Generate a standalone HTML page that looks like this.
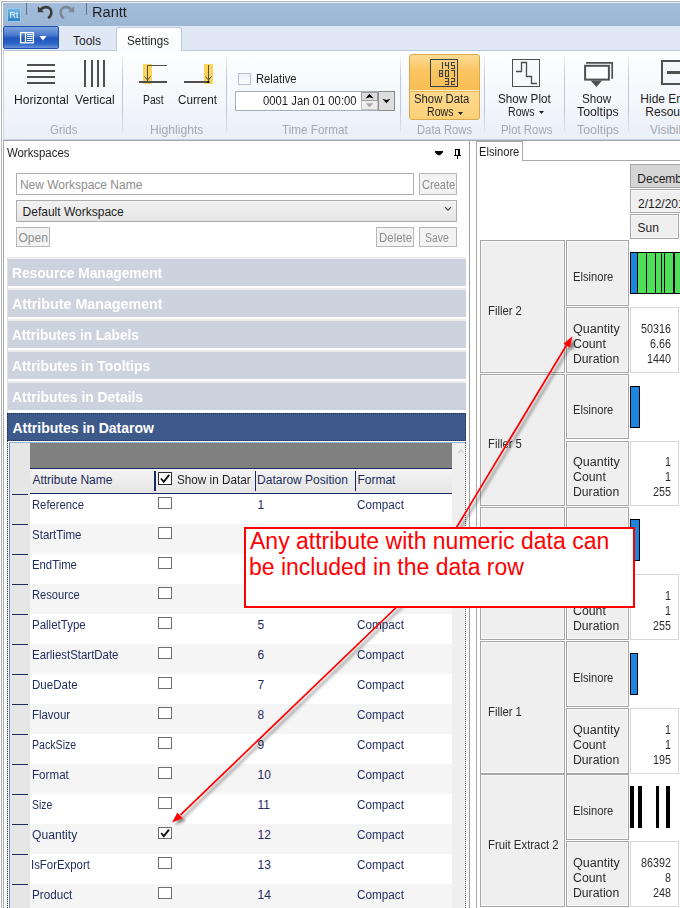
<!DOCTYPE html>
<html><head><meta charset="utf-8"><style>
html,body{margin:0;padding:0;}
body{width:680px;height:908px;overflow:hidden;position:relative;background:#fff;font-family:"Liberation Sans",sans-serif;}
div{position:absolute;box-sizing:border-box;}
.t{white-space:pre;}
svg{position:absolute;}
</style></head><body>
<div style="left:0px;top:0px;width:680px;height:908px;background:#fff;"></div>
<div style="left:1px;top:1px;width:679px;height:907px;background:#b4b4b4;"></div>
<div style="left:2px;top:2px;width:678px;height:906px;background:#fff;"></div>
<div style="left:3px;top:3px;width:677px;height:23px;background:linear-gradient(#a3bcd9,#9db6d5);"></div>
<div style="left:2px;top:2px;width:678px;height:1px;background:#e9eef5;"></div>
<div style="left:7px;top:8px;width:14px;height:14px;background:linear-gradient(#6fb4e6,#2b7fc4);border:1px solid #9cc8ea;"></div>
<div class="t" style="left:9.30px;top:11.38px;font-size:9px;line-height:9px;color:#ffffff;font-weight:normal;">Rt</div>
<div style="left:26px;top:3px;width:1px;height:12px;background:#5f7089;"></div>
<div style="left:86px;top:3px;width:1px;height:12px;background:#5f7089;"></div>
<svg style="left:34px;top:2px" width="44" height="20" viewBox="0 0 44 20"><path d="M6.5 7.6 C9 4.6 13.5 4.2 16 6.6 C18.6 9.2 17.6 13.6 14.2 16.2" fill="none" stroke="#3c3c3c" stroke-width="2.7"/><path d="M3.8 4.2 L3.8 10.2 L10 10.2 Z" fill="#3c3c3c"/><g transform="translate(44,0) scale(-1,1)"><path d="M6.5 7.6 C9 4.6 13.5 4.2 16 6.6 C18.6 9.2 17.6 13.6 14.2 16.2" fill="none" stroke="#7d8896" stroke-width="2.7"/><path d="M3.8 4.2 L3.8 10.2 L10 10.2 Z" fill="#7d8896"/></g></svg>
<div class="t" style="left:91.96px;top:5.15px;font-size:14px;line-height:14px;color:#1e1e1e;font-weight:normal;transform:scaleX(1.0438);transform-origin:0 0;">Rantt</div>
<div style="left:3px;top:26px;width:677px;height:25px;background:#dfe8f4;"></div>
<div style="left:3px;top:50px;width:677px;height:1px;background:#b9c9dd;"></div>
<div style="left:3px;top:26px;width:56px;height:23px;border:1px solid #1c4fb0;border-radius:2px;background:linear-gradient(#7fa3de 0%,#4f7fcf 35%,#1f56bd 55%,#2f66c8 80%,#6c93d8 100%);"></div>
<svg style="left:19px;top:31px" width="30" height="14" viewBox="0 0 30 14"><rect x="1.6" y="1.6" width="12.8" height="10.2" fill="none" stroke="#fff" stroke-width="1.3"/><path d="M6.5 2 V11.5" stroke="#fff" stroke-width="1.2"/><path d="M8 3.5 H13.5 M8 5.5 H13.5 M8 7.5 H13.5 M8 9.5 H13.5" stroke="#fff" stroke-width="1"/><path d="M20.5 5 L27.5 5 L24 9.5 Z" fill="#fff"/></svg>
<div class="t" style="left:73.00px;top:34.54px;font-size:12px;line-height:12px;color:#1e1e1e;font-weight:normal;">Tools</div>
<div style="left:116px;top:27px;width:66px;height:25px;border:1px solid #b9c9dd;border-bottom:none;border-radius:3px 3px 0 0;background:linear-gradient(#ffffff,#fafcfe);"></div>
<div class="t" style="left:127.00px;top:34.54px;font-size:12px;line-height:12px;color:#1e1e1e;font-weight:normal;transform:scaleX(0.9686);transform-origin:0 0;">Settings</div>
<div style="left:3px;top:51px;width:677px;height:90px;background:linear-gradient(#fdfeff 0%,#f3f6fb 60%,#e9eff8 100%);"></div>
<div style="left:3px;top:139px;width:677px;height:1.1999999999999886px;background:#c5d2e3;"></div>
<div style="left:3px;top:51px;width:1px;height:89px;background:#c9d7e8;"></div>
<div style="left:3px;top:140.2px;width:677px;height:1.200000000000017px;background:#a6a6a6;"></div>
<div style="left:122px;top:57px;width:1px;height:74px;background:linear-gradient(rgba(180,196,218,0.2),#b9c8dc 30%,#b9c8dc 70%,rgba(180,196,218,0.3));"></div>
<div style="left:226px;top:57px;width:1px;height:74px;background:linear-gradient(rgba(180,196,218,0.2),#b9c8dc 30%,#b9c8dc 70%,rgba(180,196,218,0.3));"></div>
<div style="left:400px;top:57px;width:1px;height:74px;background:linear-gradient(rgba(180,196,218,0.2),#b9c8dc 30%,#b9c8dc 70%,rgba(180,196,218,0.3));"></div>
<div style="left:484px;top:57px;width:1px;height:74px;background:linear-gradient(rgba(180,196,218,0.2),#b9c8dc 30%,#b9c8dc 70%,rgba(180,196,218,0.3));"></div>
<div style="left:564px;top:57px;width:1px;height:74px;background:linear-gradient(rgba(180,196,218,0.2),#b9c8dc 30%,#b9c8dc 70%,rgba(180,196,218,0.3));"></div>
<div style="left:628px;top:57px;width:1px;height:74px;background:linear-gradient(rgba(180,196,218,0.2),#b9c8dc 30%,#b9c8dc 70%,rgba(180,196,218,0.3));"></div>
<div class="t" style="left:50.00px;top:124.24px;font-size:12px;line-height:12px;color:#a4a9b0;font-weight:normal;transform:scaleX(0.9557);transform-origin:0 0;">Grids</div>
<div class="t" style="left:149.60px;top:124.24px;font-size:12px;line-height:12px;color:#a4a9b0;font-weight:normal;transform:scaleX(1.0134);transform-origin:0 0;">Highlights</div>
<div class="t" style="left:282.40px;top:124.24px;font-size:12px;line-height:12px;color:#a4a9b0;font-weight:normal;transform:scaleX(0.9733);transform-origin:0 0;">Time Format</div>
<div class="t" style="left:416.50px;top:124.24px;font-size:12px;line-height:12px;color:#a4a9b0;font-weight:normal;transform:scaleX(0.9372);transform-origin:0 0;">Data Rows</div>
<div class="t" style="left:500.60px;top:124.24px;font-size:12px;line-height:12px;color:#a4a9b0;font-weight:normal;transform:scaleX(0.9515);transform-origin:0 0;">Plot Rows</div>
<div class="t" style="left:577.00px;top:124.24px;font-size:12px;line-height:12px;color:#a4a9b0;font-weight:normal;transform:scaleX(1.0323);transform-origin:0 0;">Tooltips</div>
<div class="t" style="left:650.00px;top:124.24px;font-size:12px;line-height:12px;color:#a4a9b0;font-weight:normal;">Visibility</div>
<div style="left:27px;top:64px;width:28px;height:2px;background:#4f4f4f;"></div>
<div style="left:27px;top:70px;width:28px;height:2px;background:#4f4f4f;"></div>
<div style="left:27px;top:76px;width:28px;height:2px;background:#4f4f4f;"></div>
<div style="left:27px;top:82px;width:28px;height:2px;background:#4f4f4f;"></div>
<div style="left:84px;top:60px;width:2px;height:27px;background:#4f4f4f;"></div>
<div style="left:90.5px;top:60px;width:2.0px;height:27px;background:#4f4f4f;"></div>
<div style="left:96.5px;top:60px;width:2.0px;height:27px;background:#4f4f4f;"></div>
<div style="left:102.5px;top:60px;width:2.0px;height:27px;background:#4f4f4f;"></div>
<div class="t" style="left:14.00px;top:94.04px;font-size:12px;line-height:12px;color:#1e1e1e;font-weight:normal;transform:scaleX(1.0102);transform-origin:0 0;">Horizontal</div>
<div class="t" style="left:75.00px;top:94.04px;font-size:12px;line-height:12px;color:#1e1e1e;font-weight:normal;transform:scaleX(1.0081);transform-origin:0 0;">Vertical</div>
<div style="left:143px;top:64px;width:9px;height:20px;background:#fcd45c;"></div>
<div style="left:204px;top:64px;width:9px;height:20px;background:#fcd45c;"></div>
<svg style="left:135px;top:60px" width="90" height="28" viewBox="0 0 90 28"><path d="M4 22 H32" stroke="#4f4f4f" stroke-width="2"/><path d="M12.5 21 V5.5 H32" fill="none" stroke="#4f4f4f" stroke-width="1"/><path d="M9.5 16.5 L12.5 20 L15.5 16.5" fill="none" stroke="#4f4f4f" stroke-width="1"/><path d="M49 22 H73.5" stroke="#4f4f4f" stroke-width="2"/><rect x="72.5" y="21" width="2" height="2" fill="#000"/><path d="M73.5 5 V21" stroke="#4f4f4f" stroke-width="1"/><path d="M70.5 16.5 L73.5 20 L76.5 16.5" fill="none" stroke="#4f4f4f" stroke-width="1"/></svg>
<div class="t" style="left:142.60px;top:94.04px;font-size:12px;line-height:12px;color:#1e1e1e;font-weight:normal;transform:scaleX(0.8591);transform-origin:0 0;">Past</div>
<div class="t" style="left:178.00px;top:94.04px;font-size:12px;line-height:12px;color:#1e1e1e;font-weight:normal;transform:scaleX(0.9735);transform-origin:0 0;">Current</div>
<div style="left:238px;top:73px;width:13px;height:12px;border:1px solid #b8c1cf;background:linear-gradient(#eef1f5,#fbfcfd);"></div>
<div class="t" style="left:256.20px;top:73.14px;font-size:12px;line-height:12px;color:#1e1e1e;font-weight:normal;transform:scaleX(0.9341);transform-origin:0 0;">Relative</div>
<div style="left:235px;top:91px;width:160px;height:20px;border:1px solid #a9aeb6;background:#fff;"></div>
<div class="t" style="left:263.40px;top:95.34px;font-size:12px;line-height:12px;color:#1e1e1e;font-weight:normal;transform:scaleX(0.9414);transform-origin:0 0;">0001 Jan 01 00:00</div>
<div style="left:361px;top:92px;width:17px;height:9px;border:1.5px solid #9c9c9c;background:#dcdcdc;"></div>
<div style="left:361px;top:100.5px;width:17px;height:9.5px;border:1px solid #c4c4c4;border-top:none;background:#ededed;"></div>
<div style="left:378px;top:91px;width:17px;height:20px;border:1.5px solid #8b8b8b;background:#dedede;"></div>
<svg style="left:350px;top:85px" width="50" height="30" viewBox="0 0 50 30"><path d="M15.4 13.4 L19.5 8.8 L23.6 13.4 L19.5 12.2 Z" fill="#000"/><path d="M15.8 18.2 L23.2 18.2 L19.5 22.2 Z" fill="#a4a4a4"/><path d="M32.4 13.8 L36.4 15 L40.4 13.8 L36.4 18.3 Z" fill="#000"/></svg>
<div style="left:409px;top:54px;width:71px;height:66px;border:1px solid #d9aa48;border-radius:3px;background:linear-gradient(#fcdb94 0%,#fac561 25%,#f9bd52 60%,#fbc867 100%);"></div>
<div style="left:410px;top:89.5px;width:69px;height:1.0px;background:#fff0c8;"></div>
<div style="left:410px;top:90.5px;width:69px;height:28.5px;background:linear-gradient(#fcd98e,#fbd07a);border-radius:0 0 2px 2px;border-top:1px solid #e6b65a;"></div>
<div style="left:430px;top:59px;width:28px;height:28px;border:1.3px solid #3b4048;"></div>
<svg style="left:428px;top:57px" width="32" height="32" viewBox="0 0 32 32"><path d="M14.5 5.5 L14.5 8.5 M14.5 8.5 L14.5 11.5 M17.5 5.5 L17.5 8.5 M17.5 8.5 L20.5 8.5 M20.5 5.5 L20.5 8.5 M20.5 8.5 L20.5 11.5 M23.5 5.5 L26.5 5.5 M23.5 5.5 L23.5 8.5 M23.5 8.5 L26.5 8.5 M26.5 8.5 L26.5 11.5 M23.5 11.5 L26.5 11.5 M11.5 13.5 L14.5 13.5 M14.5 13.5 L14.5 16.5 M14.5 16.5 L14.5 19.5 M11.5 19.5 L14.5 19.5 M11.5 16.5 L11.5 19.5 M11.5 13.5 L11.5 16.5 M11.5 16.5 L14.5 16.5 M17.5 13.5 L20.5 13.5 M20.5 13.5 L20.5 16.5 M20.5 16.5 L20.5 19.5 M17.5 19.5 L20.5 19.5 M17.5 16.5 L17.5 19.5 M17.5 13.5 L17.5 16.5 M23.5 13.5 L26.5 13.5 M26.5 13.5 L26.5 16.5 M26.5 16.5 L26.5 19.5 M17.5 21.5 L20.5 21.5 M20.5 21.5 L20.5 24.5 M17.5 24.5 L20.5 24.5 M20.5 24.5 L20.5 27.5 M17.5 27.5 L20.5 27.5 M23.5 21.5 L26.5 21.5 M26.5 21.5 L26.5 24.5 M23.5 24.5 L26.5 24.5 M23.5 24.5 L23.5 27.5 M23.5 27.5 L26.5 27.5 " fill="none" stroke="#3b4048" stroke-width="1.1" stroke-linecap="square"/></svg>
<div class="t" style="left:414.30px;top:93.04px;font-size:12px;line-height:12px;color:#1e1e1e;font-weight:normal;transform:scaleX(0.9437);transform-origin:0 0;">Show Data</div>
<div class="t" style="left:427.00px;top:106.14px;font-size:12px;line-height:12px;color:#1e1e1e;font-weight:normal;transform:scaleX(0.8832);transform-origin:0 0;">Rows</div>
<svg style="left:457px;top:111px" width="8" height="5" viewBox="0 0 8 5"><path d="M1 1 H6 L3.5 4 Z" fill="#1e1e1e"/></svg>
<div style="left:512px;top:59px;width:28px;height:28px;border:1.5px solid #4d4d4d;background:#f7f9fc;"></div>
<svg style="left:512px;top:59px" width="28" height="28" viewBox="0 0 28 28"><path d="M4 12.5 H9.5 V3.5 H14.5 V17.5 H19.5 V24.5 H25" fill="none" stroke="#4d4d4d" stroke-width="1.3"/></svg>
<div class="t" style="left:497.60px;top:92.84px;font-size:12px;line-height:12px;color:#1e1e1e;font-weight:normal;transform:scaleX(0.9763);transform-origin:0 0;">Show Plot</div>
<div class="t" style="left:508.00px;top:105.84px;font-size:12px;line-height:12px;color:#1e1e1e;font-weight:normal;transform:scaleX(0.8832);transform-origin:0 0;">Rows</div>
<svg style="left:538px;top:110px" width="8" height="5" viewBox="0 0 8 5"><path d="M1 1 H6 L3.5 4 Z" fill="#1e1e1e"/></svg>
<svg style="left:582px;top:60px" width="33" height="28" viewBox="0 0 33 28"><path d="M4.1 2.8 H30.2 V18.7" fill="none" stroke="#505050" stroke-width="1.7"/><rect x="3.1" y="5.8" width="23.8" height="13.8" fill="#fbfcfe" stroke="#505050" stroke-width="2"/><path d="M8.6 20.4 L20.2 20.4 L14.4 26.9 Z" fill="#505050"/></svg>
<div class="t" style="left:581.50px;top:92.84px;font-size:12px;line-height:12px;color:#1e1e1e;font-weight:normal;transform:scaleX(0.9719);transform-origin:0 0;">Show</div>
<div class="t" style="left:576.50px;top:105.84px;font-size:12px;line-height:12px;color:#1e1e1e;font-weight:normal;transform:scaleX(1.0249);transform-origin:0 0;">Tooltips</div>
<div style="left:661px;top:60px;width:29px;height:25px;border:2.5px solid #505050;background:#f4f6fa;"></div>
<div style="left:667px;top:71px;width:23px;height:3px;background:#505050;"></div>
<div class="t" style="left:640.30px;top:92.84px;font-size:12px;line-height:12px;color:#1e1e1e;font-weight:normal;">Hide Empty</div>
<div class="t" style="left:645.30px;top:105.84px;font-size:12px;line-height:12px;color:#1e1e1e;font-weight:normal;">Resources</div>
<div style="left:3px;top:141px;width:467px;height:767px;background:#fff;"></div>
<div style="left:3px;top:141px;width:1px;height:767px;background:#a9a9a9;"></div>
<div style="left:469px;top:141px;width:1px;height:767px;background:#a0a0a0;"></div>
<div class="t" style="left:6.60px;top:146.64px;font-size:12px;line-height:12px;color:#1e1e1e;font-weight:normal;transform:scaleX(0.9483);transform-origin:0 0;">Workspaces</div>
<svg style="left:434px;top:150px" width="10" height="6" viewBox="0 0 10 6"><path d="M1 1 H9 V2.5 L6 5.3 H4 L1 2.5 Z" fill="#000"/></svg>
<div style="left:455px;top:149px;width:5px;height:1px;background:#000;"></div>
<div style="left:455px;top:149px;width:1px;height:6px;background:#000;"></div>
<div style="left:458px;top:149px;width:2px;height:6px;background:#000;"></div>
<div style="left:454px;top:154.5px;width:7px;height:1.5px;background:#000;"></div>
<div style="left:457px;top:156px;width:1px;height:3px;background:#000;"></div>
<div style="left:16px;top:173px;width:398px;height:22px;border:1px solid #abadb3;background:#fff;"></div>
<div class="t" style="left:19.90px;top:178.84px;font-size:12px;line-height:12px;color:#8d8d8d;font-weight:normal;">New Workspace Name</div>
<div style="left:419px;top:173px;width:38px;height:22px;border:1px solid #b7b7b7;background:#f3f3f3;"></div>
<div class="t" style="left:421.50px;top:178.84px;font-size:12px;line-height:12px;color:#8d8d8d;font-weight:normal;transform:scaleX(0.9218);transform-origin:0 0;">Create</div>
<div style="left:16px;top:200px;width:441px;height:22px;border:1px solid #acacac;background:linear-gradient(#f2f2f2,#e5e5e5);"></div>
<div class="t" style="left:22.60px;top:205.74px;font-size:12px;line-height:12px;color:#1e1e1e;font-weight:normal;">Default Workspace</div>
<svg style="left:444px;top:206px" width="8" height="6" viewBox="0 0 8 6"><path d="M1 1.2 L4 4.2 L7 1.2" fill="none" stroke="#444" stroke-width="1.2"/></svg>
<div style="left:16px;top:227px;width:34px;height:20px;border:1px solid #b7b7b7;background:#f3f3f3;"></div>
<div class="t" style="left:18.50px;top:231.84px;font-size:12px;line-height:12px;color:#8d8d8d;font-weight:normal;">Open</div>
<div style="left:376px;top:227px;width:38px;height:20px;border:1px solid #b7b7b7;background:#f3f3f3;"></div>
<div class="t" style="left:378.90px;top:231.84px;font-size:12px;line-height:12px;color:#8d8d8d;font-weight:normal;transform:scaleX(0.9568);transform-origin:0 0;">Delete</div>
<div style="left:419px;top:227px;width:38px;height:20px;border:1px solid #b7b7b7;background:#f3f3f3;"></div>
<div class="t" style="left:425.30px;top:231.84px;font-size:12px;line-height:12px;color:#8d8d8d;font-weight:normal;transform:scaleX(0.8671);transform-origin:0 0;">Save</div>
<div style="left:6.5px;top:257px;width:459.5px;height:651px;border-left:1px solid #e0e0e0;border-top:1px solid #e0e0e0;"></div>
<div style="left:7.5px;top:257.3px;width:458.0px;height:1.5px;background:#ececec;"></div>
<div style="left:7.5px;top:258.8px;width:458.0px;height:27.5px;background:#cdd3de;"></div>
<div class="t" style="left:12.40px;top:266.45px;font-size:14px;line-height:14px;color:#ffffff;font-weight:bold;transform:scaleX(0.9791);transform-origin:0 0;">Resource Management</div>
<div style="left:7.5px;top:288.3px;width:458.0px;height:1.5px;background:#ececec;"></div>
<div style="left:7.5px;top:289.8px;width:458.0px;height:27.5px;background:#cdd3de;"></div>
<div class="t" style="left:12.40px;top:297.45px;font-size:14px;line-height:14px;color:#ffffff;font-weight:bold;transform:scaleX(1.0187);transform-origin:0 0;">Attribute Management</div>
<div style="left:7.5px;top:319.3px;width:458.0px;height:1.5px;background:#ececec;"></div>
<div style="left:7.5px;top:320.8px;width:458.0px;height:27.5px;background:#cdd3de;"></div>
<div class="t" style="left:12.40px;top:328.45px;font-size:14px;line-height:14px;color:#ffffff;font-weight:bold;transform:scaleX(0.9702);transform-origin:0 0;">Attributes in Labels</div>
<div style="left:7.5px;top:350.3px;width:458.0px;height:1.5px;background:#ececec;"></div>
<div style="left:7.5px;top:351.8px;width:458.0px;height:27.5px;background:#cdd3de;"></div>
<div class="t" style="left:12.40px;top:359.45px;font-size:14px;line-height:14px;color:#ffffff;font-weight:bold;transform:scaleX(0.9883);transform-origin:0 0;">Attributes in Tooltips</div>
<div style="left:7.5px;top:381.3px;width:458.0px;height:1.5px;background:#ececec;"></div>
<div style="left:7.5px;top:382.8px;width:458.0px;height:27.5px;background:#cdd3de;"></div>
<div class="t" style="left:12.40px;top:390.45px;font-size:14px;line-height:14px;color:#ffffff;font-weight:bold;transform:scaleX(0.9913);transform-origin:0 0;">Attributes in Details</div>
<div style="left:7px;top:413px;width:459px;height:28px;background:#3e5a8b;border:1px dotted #1f2f4f;"></div>
<div class="t" style="left:12.40px;top:420.65px;font-size:14px;line-height:14px;color:#ffffff;font-weight:bold;">Attributes in Datarow</div>
<div style="left:9px;top:441.5px;width:457px;height:466.5px;border-left:1px solid #5e90cf;border-top:1px solid #8fb2d8;background:#fff;"></div>
<div style="left:7px;top:441px;width:1px;height:467px;border-left:1px dotted #333;"></div>
<div style="left:10px;top:442.5px;width:20px;height:465.5px;background:#e6e6e6;"></div>
<div style="left:30px;top:442.5px;width:422px;height:25.5px;background:#808080;"></div>
<div style="left:30px;top:468px;width:422px;height:1px;background:#1b2a5e;"></div>
<div style="left:30px;top:469px;width:422px;height:24px;background:linear-gradient(#f4f4f4,#e5e5e5);"></div>
<div style="left:30px;top:493px;width:422px;height:1.1999999999999886px;background:#1b2a5e;"></div>
<div style="left:452px;top:442.5px;width:12.5px;height:465.5px;background:#efefef;"></div>
<svg style="left:453px;top:446px" width="12" height="10" viewBox="0 0 12 10"><path d="M5.5 7 L8 4 L10.5 7" fill="none" stroke="#cfcfcf" stroke-width="1.2"/></svg>
<div style="left:154px;top:471px;width:1.5px;height:20px;background:#1b2a5e;"></div>
<div style="left:254.5px;top:471px;width:1.5px;height:20px;background:#1b2a5e;"></div>
<div style="left:354.5px;top:471px;width:1.5px;height:20px;background:#1b2a5e;"></div>
<div class="t" style="left:32.40px;top:473.84px;font-size:12px;line-height:12px;color:#1e2b5c;font-weight:normal;">Attribute Name</div>
<div style="left:158px;top:472px;width:14px;height:13px;border:1px solid #2b2b2b;background:#fff;"></div>
<svg style="left:158px;top:472px" width="14" height="13" viewBox="0 0 14 13"><path d="M3 6.5 L5.8 9.8 L11.2 2.8" fill="none" stroke="#111" stroke-width="1.9"/></svg>
<div class="t" style="left:177.30px;top:473.84px;font-size:12px;line-height:12px;color:#1e1e1e;font-weight:normal;transform:scaleX(0.9765);transform-origin:0 0;">Show in Datar</div>
<div class="t" style="left:257.10px;top:473.84px;font-size:12px;line-height:12px;color:#1e2b5c;font-weight:normal;">Datarow Position</div>
<div class="t" style="left:357.40px;top:473.84px;font-size:12px;line-height:12px;color:#1e2b5c;font-weight:normal;">Format</div>
<div style="left:12px;top:493.5px;width:16px;height:1.1999999999999886px;background:#1b2a5e;"></div>
<div class="t" style="left:32.40px;top:498.64px;font-size:12px;line-height:12px;color:#1e2b5c;font-weight:normal;transform:scaleX(0.9373);transform-origin:0 0;">Reference</div>
<div style="left:158px;top:497px;width:14px;height:12px;border:1px solid #6f6f6f;background:#fff;"></div>
<div class="t" style="left:257.50px;top:498.64px;font-size:12px;line-height:12px;color:#1e2b5c;font-weight:normal;">1</div>
<div class="t" style="left:357.40px;top:498.64px;font-size:12px;line-height:12px;color:#1e2b5c;font-weight:normal;transform:scaleX(0.9777);transform-origin:0 0;">Compact</div>
<div style="left:30px;top:524px;width:422px;height:30px;background:#f5f5f5;"></div>
<div style="left:12px;top:523.5px;width:16px;height:1.2000000000000455px;background:#1b2a5e;"></div>
<div class="t" style="left:32.40px;top:528.64px;font-size:12px;line-height:12px;color:#1e2b5c;font-weight:normal;transform:scaleX(0.9597);transform-origin:0 0;">StartTime</div>
<div style="left:158px;top:527px;width:14px;height:12px;border:1px solid #6f6f6f;background:#fff;"></div>
<div class="t" style="left:257.50px;top:528.64px;font-size:12px;line-height:12px;color:#1e2b5c;font-weight:normal;">2</div>
<div class="t" style="left:357.40px;top:528.64px;font-size:12px;line-height:12px;color:#1e2b5c;font-weight:normal;transform:scaleX(0.9777);transform-origin:0 0;">Compact</div>
<div style="left:12px;top:553.5px;width:16px;height:1.2000000000000455px;background:#1b2a5e;"></div>
<div class="t" style="left:32.40px;top:558.64px;font-size:12px;line-height:12px;color:#1e2b5c;font-weight:normal;transform:scaleX(0.9437);transform-origin:0 0;">EndTime</div>
<div style="left:158px;top:557px;width:14px;height:12px;border:1px solid #6f6f6f;background:#fff;"></div>
<div class="t" style="left:257.50px;top:558.64px;font-size:12px;line-height:12px;color:#1e2b5c;font-weight:normal;">3</div>
<div class="t" style="left:357.40px;top:558.64px;font-size:12px;line-height:12px;color:#1e2b5c;font-weight:normal;transform:scaleX(0.9777);transform-origin:0 0;">Compact</div>
<div style="left:30px;top:584px;width:422px;height:30px;background:#f5f5f5;"></div>
<div style="left:12px;top:583.5px;width:16px;height:1.2000000000000455px;background:#1b2a5e;"></div>
<div class="t" style="left:32.40px;top:588.64px;font-size:12px;line-height:12px;color:#1e2b5c;font-weight:normal;transform:scaleX(0.9287);transform-origin:0 0;">Resource</div>
<div style="left:158px;top:587px;width:14px;height:12px;border:1px solid #6f6f6f;background:#fff;"></div>
<div class="t" style="left:257.50px;top:588.64px;font-size:12px;line-height:12px;color:#1e2b5c;font-weight:normal;">4</div>
<div class="t" style="left:357.40px;top:588.64px;font-size:12px;line-height:12px;color:#1e2b5c;font-weight:normal;transform:scaleX(0.9777);transform-origin:0 0;">Compact</div>
<div style="left:12px;top:613.5px;width:16px;height:1.2000000000000455px;background:#1b2a5e;"></div>
<div class="t" style="left:32.40px;top:618.64px;font-size:12px;line-height:12px;color:#1e2b5c;font-weight:normal;transform:scaleX(0.9581);transform-origin:0 0;">PalletType</div>
<div style="left:158px;top:617px;width:14px;height:12px;border:1px solid #6f6f6f;background:#fff;"></div>
<div class="t" style="left:257.50px;top:618.64px;font-size:12px;line-height:12px;color:#1e2b5c;font-weight:normal;">5</div>
<div class="t" style="left:357.40px;top:618.64px;font-size:12px;line-height:12px;color:#1e2b5c;font-weight:normal;transform:scaleX(0.9777);transform-origin:0 0;">Compact</div>
<div style="left:30px;top:644px;width:422px;height:30px;background:#f5f5f5;"></div>
<div style="left:12px;top:643.5px;width:16px;height:1.2000000000000455px;background:#1b2a5e;"></div>
<div class="t" style="left:32.40px;top:648.64px;font-size:12px;line-height:12px;color:#1e2b5c;font-weight:normal;transform:scaleX(0.9535);transform-origin:0 0;">EarliestStartDate</div>
<div style="left:158px;top:647px;width:14px;height:12px;border:1px solid #6f6f6f;background:#fff;"></div>
<div class="t" style="left:257.50px;top:648.64px;font-size:12px;line-height:12px;color:#1e2b5c;font-weight:normal;">6</div>
<div class="t" style="left:357.40px;top:648.64px;font-size:12px;line-height:12px;color:#1e2b5c;font-weight:normal;transform:scaleX(0.9777);transform-origin:0 0;">Compact</div>
<div style="left:12px;top:673.5px;width:16px;height:1.2000000000000455px;background:#1b2a5e;"></div>
<div class="t" style="left:32.40px;top:678.64px;font-size:12px;line-height:12px;color:#1e2b5c;font-weight:normal;transform:scaleX(0.9625);transform-origin:0 0;">DueDate</div>
<div style="left:158px;top:677px;width:14px;height:12px;border:1px solid #6f6f6f;background:#fff;"></div>
<div class="t" style="left:257.50px;top:678.64px;font-size:12px;line-height:12px;color:#1e2b5c;font-weight:normal;">7</div>
<div class="t" style="left:357.40px;top:678.64px;font-size:12px;line-height:12px;color:#1e2b5c;font-weight:normal;transform:scaleX(0.9777);transform-origin:0 0;">Compact</div>
<div style="left:30px;top:704px;width:422px;height:30px;background:#f5f5f5;"></div>
<div style="left:12px;top:703.5px;width:16px;height:1.2000000000000455px;background:#1b2a5e;"></div>
<div class="t" style="left:32.40px;top:708.64px;font-size:12px;line-height:12px;color:#1e2b5c;font-weight:normal;transform:scaleX(0.9521);transform-origin:0 0;">Flavour</div>
<div style="left:158px;top:707px;width:14px;height:12px;border:1px solid #6f6f6f;background:#fff;"></div>
<div class="t" style="left:257.50px;top:708.64px;font-size:12px;line-height:12px;color:#1e2b5c;font-weight:normal;">8</div>
<div class="t" style="left:357.40px;top:708.64px;font-size:12px;line-height:12px;color:#1e2b5c;font-weight:normal;transform:scaleX(0.9777);transform-origin:0 0;">Compact</div>
<div style="left:12px;top:733.5px;width:16px;height:1.2000000000000455px;background:#1b2a5e;"></div>
<div class="t" style="left:32.40px;top:738.64px;font-size:12px;line-height:12px;color:#1e2b5c;font-weight:normal;transform:scaleX(0.8839);transform-origin:0 0;">PackSize</div>
<div style="left:158px;top:737px;width:14px;height:12px;border:1px solid #6f6f6f;background:#fff;"></div>
<div class="t" style="left:257.50px;top:738.64px;font-size:12px;line-height:12px;color:#1e2b5c;font-weight:normal;">9</div>
<div class="t" style="left:357.40px;top:738.64px;font-size:12px;line-height:12px;color:#1e2b5c;font-weight:normal;transform:scaleX(0.9777);transform-origin:0 0;">Compact</div>
<div style="left:30px;top:764px;width:422px;height:30px;background:#f5f5f5;"></div>
<div style="left:12px;top:763.5px;width:16px;height:1.2000000000000455px;background:#1b2a5e;"></div>
<div class="t" style="left:32.40px;top:768.64px;font-size:12px;line-height:12px;color:#1e2b5c;font-weight:normal;transform:scaleX(0.9697);transform-origin:0 0;">Format</div>
<div style="left:158px;top:767px;width:14px;height:12px;border:1px solid #6f6f6f;background:#fff;"></div>
<div class="t" style="left:257.50px;top:768.64px;font-size:12px;line-height:12px;color:#1e2b5c;font-weight:normal;">10</div>
<div class="t" style="left:357.40px;top:768.64px;font-size:12px;line-height:12px;color:#1e2b5c;font-weight:normal;transform:scaleX(0.9777);transform-origin:0 0;">Compact</div>
<div style="left:12px;top:793.5px;width:16px;height:1.2000000000000455px;background:#1b2a5e;"></div>
<div class="t" style="left:32.40px;top:798.64px;font-size:12px;line-height:12px;color:#1e2b5c;font-weight:normal;transform:scaleX(0.8661);transform-origin:0 0;">Size</div>
<div style="left:158px;top:797px;width:14px;height:12px;border:1px solid #6f6f6f;background:#fff;"></div>
<div class="t" style="left:257.50px;top:798.64px;font-size:12px;line-height:12px;color:#1e2b5c;font-weight:normal;">11</div>
<div class="t" style="left:357.40px;top:798.64px;font-size:12px;line-height:12px;color:#1e2b5c;font-weight:normal;transform:scaleX(0.9777);transform-origin:0 0;">Compact</div>
<div style="left:30px;top:824px;width:422px;height:30px;background:#f5f5f5;"></div>
<div style="left:12px;top:823.5px;width:16px;height:1.2000000000000455px;background:#1b2a5e;"></div>
<div class="t" style="left:32.40px;top:828.64px;font-size:12px;line-height:12px;color:#1e2b5c;font-weight:normal;transform:scaleX(1.0114);transform-origin:0 0;">Quantity</div>
<div style="left:158px;top:827px;width:14px;height:12px;border:1px solid #6f6f6f;background:#fff;"></div>
<svg style="left:158px;top:827px" width="14" height="12" viewBox="0 0 14 12"><path d="M3.2 6 L5.8 9.2 L11 2.6" fill="none" stroke="#111" stroke-width="1.9"/></svg>
<div class="t" style="left:257.50px;top:828.64px;font-size:12px;line-height:12px;color:#1e2b5c;font-weight:normal;">12</div>
<div class="t" style="left:357.40px;top:828.64px;font-size:12px;line-height:12px;color:#1e2b5c;font-weight:normal;transform:scaleX(0.9777);transform-origin:0 0;">Compact</div>
<div style="left:12px;top:853.5px;width:16px;height:1.2000000000000455px;background:#1b2a5e;"></div>
<div class="t" style="left:31.45px;top:858.64px;font-size:12px;line-height:12px;color:#1e2b5c;font-weight:normal;transform:scaleX(0.9500);transform-origin:0 0;">IsForExport</div>
<div style="left:158px;top:857px;width:14px;height:12px;border:1px solid #6f6f6f;background:#fff;"></div>
<div class="t" style="left:257.50px;top:858.64px;font-size:12px;line-height:12px;color:#1e2b5c;font-weight:normal;">13</div>
<div class="t" style="left:357.40px;top:858.64px;font-size:12px;line-height:12px;color:#1e2b5c;font-weight:normal;transform:scaleX(0.9777);transform-origin:0 0;">Compact</div>
<div style="left:30px;top:884px;width:422px;height:30px;background:#f5f5f5;"></div>
<div style="left:12px;top:883.5px;width:16px;height:1.2000000000000455px;background:#1b2a5e;"></div>
<div class="t" style="left:32.40px;top:888.64px;font-size:12px;line-height:12px;color:#1e2b5c;font-weight:normal;transform:scaleX(0.9757);transform-origin:0 0;">Product</div>
<div style="left:158px;top:887px;width:14px;height:12px;border:1px solid #6f6f6f;background:#fff;"></div>
<div class="t" style="left:257.50px;top:888.64px;font-size:12px;line-height:12px;color:#1e2b5c;font-weight:normal;">14</div>
<div class="t" style="left:357.40px;top:888.64px;font-size:12px;line-height:12px;color:#1e2b5c;font-weight:normal;transform:scaleX(0.9777);transform-origin:0 0;">Compact</div>
<div style="left:465px;top:441.5px;width:1px;height:466.5px;border-right:1px dotted #555;"></div>
<div style="left:470px;top:141px;width:6px;height:767px;background:#fff;"></div>
<div style="left:476px;top:141px;width:204px;height:767px;background:#fff;"></div>
<div style="left:476px;top:141.5px;width:1px;height:766.5px;background:#a9a9a9;"></div>
<div style="left:476px;top:141px;width:47px;height:20px;border:1px solid #a9a9a9;border-bottom:none;background:#fff;"></div>
<div style="left:522.5px;top:160px;width:157.5px;height:1px;background:#a9a9a9;"></div>
<div class="t" style="left:479.40px;top:145.64px;font-size:12px;line-height:12px;color:#1e1e1e;font-weight:normal;transform:scaleX(0.9295);transform-origin:0 0;">Elsinore</div>
<div style="left:630px;top:164px;width:60px;height:24px;background:#d5d5d5;border:1px solid #a6a6a6;"></div>
<div class="t" style="left:637.30px;top:173.04px;font-size:12px;line-height:12px;color:#1e1e1e;font-weight:normal;">December 2012</div>
<div style="left:630px;top:189px;width:60px;height:24px;background:#efefef;border:1px solid #a6a6a6;box-shadow:inset 0 0 0 1px #f9f9f9;"></div>
<div class="t" style="left:638.00px;top:198.14px;font-size:12px;line-height:12px;color:#1e1e1e;font-weight:normal;">2/12/2012</div>
<div style="left:630px;top:214px;width:49px;height:25px;background:#efefef;border:1px solid #a6a6a6;box-shadow:inset 0 0 0 1px #f9f9f9;"></div>
<div class="t" style="left:637.50px;top:222.44px;font-size:12px;line-height:12px;color:#1e1e1e;font-weight:normal;">Sun</div>
<div style="left:480px;top:240px;width:85px;height:132.5px;background:#efefef;border:1px solid #a6a6a6;box-shadow:inset 0 0 0 1px #f9f9f9;"></div>
<div class="t" style="left:487.50px;top:304.84px;font-size:12px;line-height:12px;color:#2b2b2b;font-weight:normal;transform:scaleX(0.9413);transform-origin:0 0;">Filler 2</div>
<div style="left:566px;top:240px;width:63px;height:65.5px;background:#efefef;border:1px solid #a6a6a6;box-shadow:inset 0 0 0 1px #f9f9f9;"></div>
<div class="t" style="left:573.20px;top:270.84px;font-size:12px;line-height:12px;color:#2b2b2b;font-weight:normal;transform:scaleX(0.9295);transform-origin:0 0;">Elsinore</div>
<div style="left:566px;top:307px;width:63px;height:65.5px;background:#efefef;border:1px solid #a6a6a6;box-shadow:inset 0 0 0 1px #f9f9f9;"></div>
<div class="t" style="left:573.20px;top:322.64px;font-size:12px;line-height:12px;color:#2b2b2b;font-weight:normal;transform:scaleX(1.0472);transform-origin:0 0;">Quantity</div>
<div class="t" style="left:573.20px;top:337.64px;font-size:12px;line-height:12px;color:#2b2b2b;font-weight:normal;transform:scaleX(1.0249);transform-origin:0 0;">Count</div>
<div class="t" style="left:573.20px;top:352.64px;font-size:12px;line-height:12px;color:#2b2b2b;font-weight:normal;transform:scaleX(1.0183);transform-origin:0 0;">Duration</div>
<div style="left:630px;top:307px;width:49px;height:65.5px;background:#fff;border:1px solid #d8d8d8;"></div>
<div class="t" style="left:641.04px;top:322.64px;font-size:12px;line-height:12px;color:#2b2b2b;font-weight:normal;transform:scaleX(0.8950);transform-origin:0 0;">50316</div>
<div class="t" style="left:650.00px;top:337.64px;font-size:12px;line-height:12px;color:#2b2b2b;font-weight:normal;transform:scaleX(0.8950);transform-origin:0 0;">6.66</div>
<div class="t" style="left:647.02px;top:352.64px;font-size:12px;line-height:12px;color:#2b2b2b;font-weight:normal;transform:scaleX(0.8950);transform-origin:0 0;">1440</div>
<div style="left:480px;top:373.5px;width:85px;height:132.5px;background:#efefef;border:1px solid #a6a6a6;box-shadow:inset 0 0 0 1px #f9f9f9;"></div>
<div class="t" style="left:487.50px;top:438.34px;font-size:12px;line-height:12px;color:#2b2b2b;font-weight:normal;transform:scaleX(0.9413);transform-origin:0 0;">Filler 5</div>
<div style="left:566px;top:373.5px;width:63px;height:65.5px;background:#efefef;border:1px solid #a6a6a6;box-shadow:inset 0 0 0 1px #f9f9f9;"></div>
<div class="t" style="left:573.20px;top:404.34px;font-size:12px;line-height:12px;color:#2b2b2b;font-weight:normal;transform:scaleX(0.9295);transform-origin:0 0;">Elsinore</div>
<div style="left:566px;top:440.5px;width:63px;height:65.5px;background:#efefef;border:1px solid #a6a6a6;box-shadow:inset 0 0 0 1px #f9f9f9;"></div>
<div class="t" style="left:573.20px;top:456.14px;font-size:12px;line-height:12px;color:#2b2b2b;font-weight:normal;transform:scaleX(1.0472);transform-origin:0 0;">Quantity</div>
<div class="t" style="left:573.20px;top:471.14px;font-size:12px;line-height:12px;color:#2b2b2b;font-weight:normal;transform:scaleX(1.0249);transform-origin:0 0;">Count</div>
<div class="t" style="left:573.20px;top:486.14px;font-size:12px;line-height:12px;color:#2b2b2b;font-weight:normal;transform:scaleX(1.0183);transform-origin:0 0;">Duration</div>
<div style="left:630px;top:440.5px;width:49px;height:65.5px;background:#fff;border:1px solid #d8d8d8;"></div>
<div class="t" style="left:664.94px;top:456.14px;font-size:12px;line-height:12px;color:#2b2b2b;font-weight:normal;transform:scaleX(0.8950);transform-origin:0 0;">1</div>
<div class="t" style="left:664.94px;top:471.14px;font-size:12px;line-height:12px;color:#2b2b2b;font-weight:normal;transform:scaleX(0.8950);transform-origin:0 0;">1</div>
<div class="t" style="left:652.99px;top:486.14px;font-size:12px;line-height:12px;color:#2b2b2b;font-weight:normal;transform:scaleX(0.8950);transform-origin:0 0;">255</div>
<div style="left:480px;top:507.2px;width:85px;height:132.50000000000006px;background:#efefef;border:1px solid #a6a6a6;box-shadow:inset 0 0 0 1px #f9f9f9;"></div>
<div class="t" style="left:487.50px;top:572.04px;font-size:12px;line-height:12px;color:#2b2b2b;font-weight:normal;transform:scaleX(0.9413);transform-origin:0 0;">Filler 6</div>
<div style="left:566px;top:507.2px;width:63px;height:65.50000000000006px;background:#efefef;border:1px solid #a6a6a6;box-shadow:inset 0 0 0 1px #f9f9f9;"></div>
<div class="t" style="left:573.20px;top:538.04px;font-size:12px;line-height:12px;color:#2b2b2b;font-weight:normal;transform:scaleX(0.9295);transform-origin:0 0;">Elsinore</div>
<div style="left:566px;top:574.2px;width:63px;height:65.5px;background:#efefef;border:1px solid #a6a6a6;box-shadow:inset 0 0 0 1px #f9f9f9;"></div>
<div class="t" style="left:573.20px;top:589.84px;font-size:12px;line-height:12px;color:#2b2b2b;font-weight:normal;transform:scaleX(1.0472);transform-origin:0 0;">Quantity</div>
<div class="t" style="left:573.20px;top:604.84px;font-size:12px;line-height:12px;color:#2b2b2b;font-weight:normal;transform:scaleX(1.0249);transform-origin:0 0;">Count</div>
<div class="t" style="left:573.20px;top:619.84px;font-size:12px;line-height:12px;color:#2b2b2b;font-weight:normal;transform:scaleX(1.0183);transform-origin:0 0;">Duration</div>
<div style="left:630px;top:574.2px;width:49px;height:65.5px;background:#fff;border:1px solid #d8d8d8;"></div>
<div class="t" style="left:664.94px;top:589.84px;font-size:12px;line-height:12px;color:#2b2b2b;font-weight:normal;transform:scaleX(0.8950);transform-origin:0 0;">1</div>
<div class="t" style="left:664.94px;top:604.84px;font-size:12px;line-height:12px;color:#2b2b2b;font-weight:normal;transform:scaleX(0.8950);transform-origin:0 0;">1</div>
<div class="t" style="left:652.99px;top:619.84px;font-size:12px;line-height:12px;color:#2b2b2b;font-weight:normal;transform:scaleX(0.8950);transform-origin:0 0;">255</div>
<div style="left:480px;top:641px;width:85px;height:132.5px;background:#efefef;border:1px solid #a6a6a6;box-shadow:inset 0 0 0 1px #f9f9f9;"></div>
<div class="t" style="left:487.50px;top:705.84px;font-size:12px;line-height:12px;color:#2b2b2b;font-weight:normal;transform:scaleX(0.9413);transform-origin:0 0;">Filler 1</div>
<div style="left:566px;top:641px;width:63px;height:65.5px;background:#efefef;border:1px solid #a6a6a6;box-shadow:inset 0 0 0 1px #f9f9f9;"></div>
<div class="t" style="left:573.20px;top:671.84px;font-size:12px;line-height:12px;color:#2b2b2b;font-weight:normal;transform:scaleX(0.9295);transform-origin:0 0;">Elsinore</div>
<div style="left:566px;top:708px;width:63px;height:65.5px;background:#efefef;border:1px solid #a6a6a6;box-shadow:inset 0 0 0 1px #f9f9f9;"></div>
<div class="t" style="left:573.20px;top:723.64px;font-size:12px;line-height:12px;color:#2b2b2b;font-weight:normal;transform:scaleX(1.0472);transform-origin:0 0;">Quantity</div>
<div class="t" style="left:573.20px;top:738.64px;font-size:12px;line-height:12px;color:#2b2b2b;font-weight:normal;transform:scaleX(1.0249);transform-origin:0 0;">Count</div>
<div class="t" style="left:573.20px;top:753.64px;font-size:12px;line-height:12px;color:#2b2b2b;font-weight:normal;transform:scaleX(1.0183);transform-origin:0 0;">Duration</div>
<div style="left:630px;top:708px;width:49px;height:65.5px;background:#fff;border:1px solid #d8d8d8;"></div>
<div class="t" style="left:664.94px;top:723.64px;font-size:12px;line-height:12px;color:#2b2b2b;font-weight:normal;transform:scaleX(0.8950);transform-origin:0 0;">1</div>
<div class="t" style="left:664.94px;top:738.64px;font-size:12px;line-height:12px;color:#2b2b2b;font-weight:normal;transform:scaleX(0.8950);transform-origin:0 0;">1</div>
<div class="t" style="left:652.99px;top:753.64px;font-size:12px;line-height:12px;color:#2b2b2b;font-weight:normal;transform:scaleX(0.8950);transform-origin:0 0;">195</div>
<div style="left:480px;top:774.3px;width:85px;height:132.5px;background:#efefef;border:1px solid #a6a6a6;box-shadow:inset 0 0 0 1px #f9f9f9;"></div>
<div class="t" style="left:487.50px;top:839.14px;font-size:12px;line-height:12px;color:#2b2b2b;font-weight:normal;transform:scaleX(0.9465);transform-origin:0 0;">Fruit Extract 2</div>
<div style="left:566px;top:774.3px;width:63px;height:65.5px;background:#efefef;border:1px solid #a6a6a6;box-shadow:inset 0 0 0 1px #f9f9f9;"></div>
<div class="t" style="left:573.20px;top:805.14px;font-size:12px;line-height:12px;color:#2b2b2b;font-weight:normal;transform:scaleX(0.9295);transform-origin:0 0;">Elsinore</div>
<div style="left:566px;top:841.3px;width:63px;height:65.5px;background:#efefef;border:1px solid #a6a6a6;box-shadow:inset 0 0 0 1px #f9f9f9;"></div>
<div class="t" style="left:573.20px;top:856.94px;font-size:12px;line-height:12px;color:#2b2b2b;font-weight:normal;transform:scaleX(1.0472);transform-origin:0 0;">Quantity</div>
<div class="t" style="left:573.20px;top:871.94px;font-size:12px;line-height:12px;color:#2b2b2b;font-weight:normal;transform:scaleX(1.0249);transform-origin:0 0;">Count</div>
<div class="t" style="left:573.20px;top:886.94px;font-size:12px;line-height:12px;color:#2b2b2b;font-weight:normal;transform:scaleX(1.0183);transform-origin:0 0;">Duration</div>
<div style="left:630px;top:841.3px;width:49px;height:65.5px;background:#fff;border:1px solid #d8d8d8;"></div>
<div class="t" style="left:641.04px;top:856.94px;font-size:12px;line-height:12px;color:#2b2b2b;font-weight:normal;transform:scaleX(0.8950);transform-origin:0 0;">86392</div>
<div class="t" style="left:664.94px;top:871.94px;font-size:12px;line-height:12px;color:#2b2b2b;font-weight:normal;transform:scaleX(0.8950);transform-origin:0 0;">8</div>
<div class="t" style="left:652.99px;top:886.94px;font-size:12px;line-height:12px;color:#2b2b2b;font-weight:normal;transform:scaleX(0.8950);transform-origin:0 0;">248</div>
<div style="left:630px;top:252px;width:60px;height:42px;background:#4fe05a;border:1px solid #000;"></div>
<div style="left:630px;top:252px;width:8px;height:42px;background:#1b86e0;border:1px solid #000;"></div>
<div style="left:645.5px;top:252px;width:1.5px;height:42px;background:#000;"></div>
<div style="left:654.5px;top:252px;width:1.5px;height:42px;background:#000;"></div>
<div style="left:660.5px;top:252px;width:1.5px;height:42px;background:#000;"></div>
<div style="left:663.5px;top:252px;width:1.5px;height:42px;background:#000;"></div>
<div style="left:673.0px;top:252px;width:1.5px;height:42px;background:#000;"></div>
<div style="left:630px;top:385.5px;width:9.5px;height:42.0px;background:#1b86e0;border:1px solid #000;"></div>
<div style="left:630px;top:519.2px;width:9.5px;height:42.0px;background:#1b86e0;border:1px solid #000;"></div>
<div style="left:630px;top:653px;width:8px;height:42px;background:#1b86e0;border:1px solid #000;"></div>
<div style="left:630px;top:786.3px;width:4.2999999999999545px;height:42.0px;background:#000;"></div>
<div style="left:638.3px;top:786.3px;width:3.7000000000000455px;height:42.0px;background:#000;"></div>
<div style="left:656.2px;top:786.3px;width:3.099999999999909px;height:42.0px;background:#000;"></div>
<div style="left:666.1px;top:786.3px;width:4.0px;height:42.0px;background:#000;"></div>
<svg style="left:0;top:0" width="680" height="908" viewBox="0 0 680 908"><defs><filter id="sh" x="-20%" y="-20%" width="140%" height="140%"><feDropShadow dx="3" dy="2.4" stdDeviation="1.8" flood-color="#000" flood-opacity="0.5"/></filter></defs><g filter="url(#sh)"><path d="M451.4 536 L566.9 344.5" stroke="#ff0000" stroke-width="1.7" fill="none"/><path d="M572.4 336.2 L563.5 343.7 L570 347.6 Z" fill="#ff0000"/><path d="M405 599 L180.5 814.8" stroke="#ff0000" stroke-width="1.7" fill="none"/><path d="M172.1 822.6 L177.4 812.6 L182.6 818.2 Z" fill="#ff0000"/></g></svg>
<div style="left:244px;top:527px;width:391px;height:81px;border:2px solid #ff0000;background:#fff;"></div>
<div class="t" style="left:250.00px;top:530.23px;font-size:23px;line-height:23px;color:#ff0000;font-weight:normal;">Any attribute with numeric data can</div>
<div class="t" style="left:249.00px;top:556.23px;font-size:23px;line-height:23px;color:#ff0000;font-weight:normal;">be included in the data row</div>
</body></html>
